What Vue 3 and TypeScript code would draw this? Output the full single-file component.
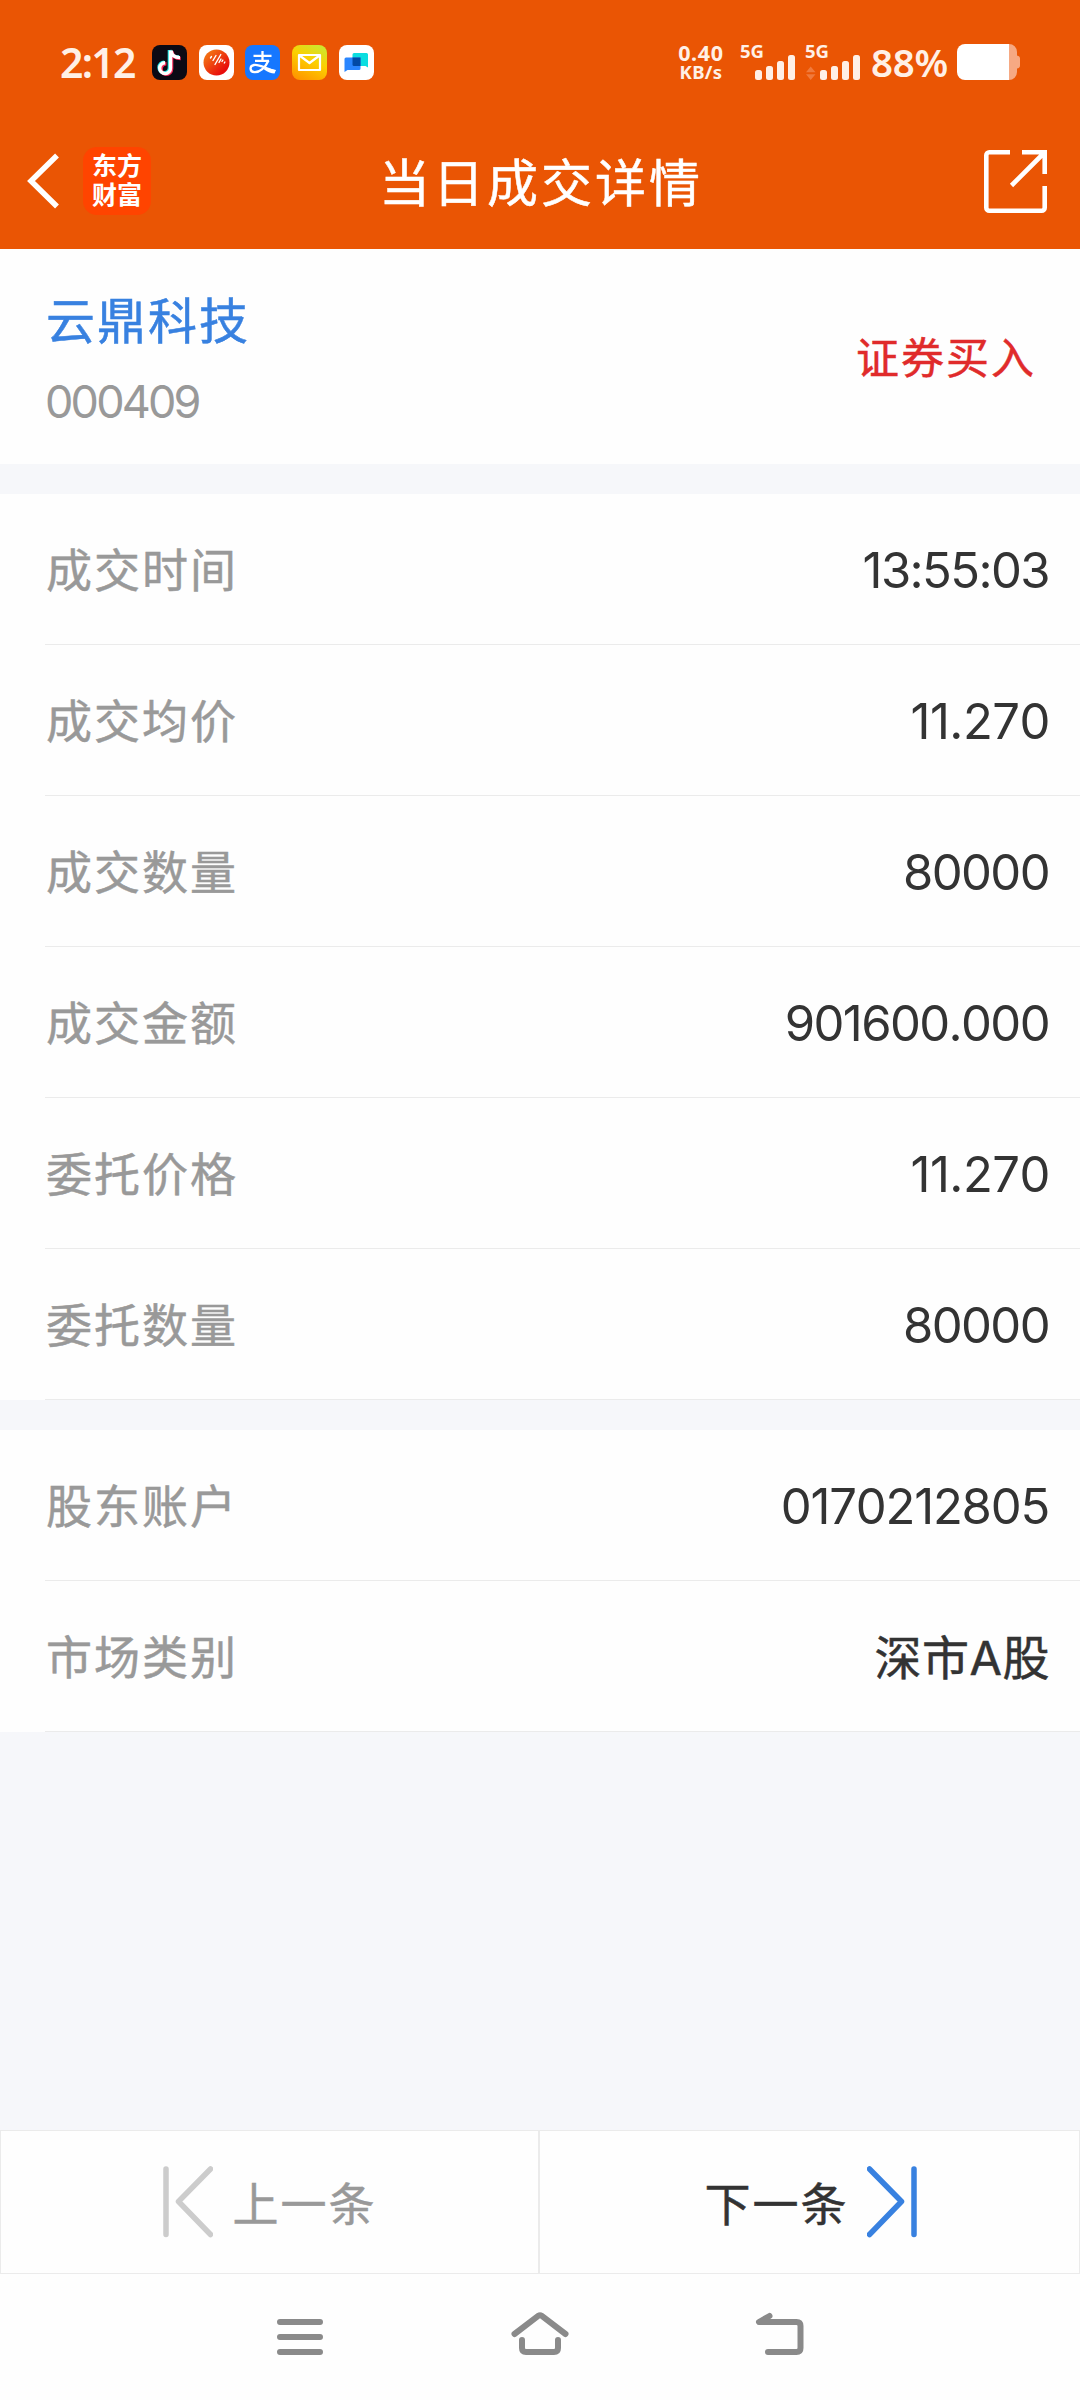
<script setup lang="ts">
interface Field {
  label: string
  value: string
  kind?: 'price' | 'long' | 'text'
}

const tradeFields: Field[] = [
  { label: '成交时间', value: '13:55:03' },
  { label: '成交均价', value: '11.270', kind: 'price' },
  { label: '成交数量', value: '80000' },
  { label: '成交金额', value: '901600.000' },
  { label: '委托价格', value: '11.270', kind: 'price' },
  { label: '委托数量', value: '80000' },
]

const accountFields: Field[] = [
  { label: '股东账户', value: '0170212805', kind: 'long' },
  { label: '市场类别', value: '深市A股', kind: 'text' },
]

const groups: Field[][] = [tradeFields, accountFields]
</script>

<template>
  <div class="screen">
    <header class="top">
      <div class="status">
        <span class="clock">2:12</span>
        <div class="apps">
          <svg viewBox="0 0 35 35">
            <rect width="35" height="35" rx="8" fill="#0b0a14" />
            <g fill="none" stroke-width="3.4">
              <path d="M17.4 5V22.5A5.2 5.2 0 1 1 12.2 17.3M17.8 5C18.3 9.500 22 12 27 12" stroke="#25e5e3" />
              <path d="M19.600 6.500V24A5.2 5.2 0 1 1 14.400 18.800M20 6.500C20.500 11 23.700 13.500 28.700 13.500" stroke="#f62a59" />
              <path d="M18.500 5.500V23A5.400 5.400 0 1 1 13.100 17.800M19 5.500C19.500 10.500 22.700 12.600 28 12.600" stroke="#fff" />
            </g>
          </svg>
          <svg viewBox="0 0 35 35">
            <defs>
              <linearGradient id="ball" x1="0" y1="0" x2="1" y2="1">
                <stop offset="0.2" stop-color="#f26a12" />
                <stop offset="0.8" stop-color="#e80c0c" />
              </linearGradient>
            </defs>
            <rect width="35" height="35" rx="8" fill="#fff" />
            <circle cx="17.500" cy="17.500" r="13" fill="url(#ball)" />
            <path d="M11.500 13l1-1.500M14 15.500l3-5M16 19.500l5.800-10M20 17.500l2-3.500M23 16.500l.8-1.300M25.300 18l.6-1" stroke="#fff" stroke-width="1.400" stroke-linecap="round" />
          </svg>
          <svg viewBox="0 0 35 35">
            <rect width="35" height="35" rx="8" fill="#1677ff" />
            <g fill="none" stroke="#fff" stroke-width="2.300">
              <path d="M8.500 10.800H26.500M17.500 6V15.500M10 15.800H24" />
              <path d="M23.500 15.500C20.500 22.500 14.500 27.500 9.500 27.200C4.500 26.800 4.200 21 9 20C14.500 19 20 23.500 30 26.300" />
            </g>
            <path d="M20 22.500L31 25L29.500 28.500C26 28.500 23 27 19 24.500z" fill="#fff" />
          </svg>
          <svg viewBox="0 0 35 35">
            <defs>
              <linearGradient id="mail" x1="0.200" y1="1" x2="0.700" y2="0">
                <stop offset="0" stop-color="#ff9500" />
                <stop offset="0.600" stop-color="#fcd000" />
                <stop offset="1" stop-color="#cfe62c" />
              </linearGradient>
            </defs>
            <rect width="35" height="35" rx="8" fill="url(#mail)" />
            <path d="M7 10H28V25H7ZM7.500 10.500L17.500 18L27.500 10.500" fill="none" stroke="#fff" stroke-width="2.200" stroke-linejoin="round" />
          </svg>
          <svg viewBox="0 0 35 35">
            <rect width="35" height="35" rx="8" fill="#fff" />
            <path d="M15 8H27.500a1.500 1.500 0 0 1 1.500 1.500V22.500L26.500 21H13.500V9.500A1.500 1.500 0 0 1 15 8z" fill="#0bdde0" />
            <path d="M7 12.500H21.500V23.500A1.500 1.500 0 0 1 20 25H8.500L5.500 27V14A1.500 1.500 0 0 1 7 12.500z" fill="#2a86ff" />
            <path d="M13.500 12.500H21.500V21H15A1.500 1.500 0 0 1 13.500 19.500z" fill="#024aa5" />
          </svg>
        </div>
        <div class="speed">
          <span class="rate">0.40</span>
          <span class="unit">KB/s</span>
        </div>
        <svg class="signals" viewBox="0 0 120 36">
          <g class="net" fill="#fff0e6">
            <text x="-1" y="14">5G</text>
            <text x="64" y="14">5G</text>
            <rect x="14" y="26" width="7" height="10" rx="2.500" />
            <rect x="25" y="22" width="7" height="14" rx="2.500" />
            <rect x="36" y="17" width="7" height="19" rx="2.500" />
            <rect x="47" y="11" width="7" height="25" rx="2.500" />
            <rect x="79" y="26" width="7" height="10" rx="2.500" />
            <rect x="90" y="22" width="7" height="14" rx="2.500" />
            <rect x="101" y="17" width="7" height="19" rx="2.500" />
            <rect x="112" y="11" width="7" height="25" rx="2.500" />
          </g>
          <path d="M65 28.300L69.700 22.500L74.500 28.300zM65 30.300L69.700 36L74.500 30.300z" fill="#f07a3c" />
        </svg>
        <span class="percent">88%</span>
        <svg class="battery" viewBox="0 0 63 36">
          <path d="M52 0a8 8 0 0 1 8 8V11.500q3 .5 3 3V21.500q0 2.500-3 3V28a8 8 0 0 1-8 8z" fill="#f6a983" />
          <path d="M8 0H52V36H8A8 8 0 0 1 0 28V8A8 8 0 0 1 8 0z" fill="#fff" />
        </svg>
      </div>

      <nav class="nav">
        <div class="nav-left">
          <svg class="back" viewBox="0 0 34 56">
            <path d="M31 2.500L5 28L31 53.500" fill="none" stroke="#fff" stroke-width="5.500" />
          </svg>
          <div class="brand"><span>东方</span><span>财富</span></div>
        </div>
        <h1>当日成交详情</h1>
        <svg class="share" viewBox="0 0 63 63">
          <g fill="none" stroke="#fff" stroke-width="4.600">
            <path d="M26 2.300H5.300a3 3 0 0 0-3 3V57.700a3 3 0 0 0 3 3H57.700a3 3 0 0 0 3-3V36" />
            <path d="M38 2.300H60.700V24M60 3L27.500 35.500" />
          </g>
        </svg>
      </nav>
    </header>

    <section class="stock">
      <div class="names">
        <span class="name">云鼎科技</span>
        <span class="code">000409</span>
      </div>
      <span class="side">证券买入</span>
    </section>

    <section v-for="(group, i) in groups" :key="i" class="group">
      <div v-for="field in group" :key="field.label" class="row">
        <span class="label">{{ field.label }}</span>
        <span class="value" :class="field.kind">{{ field.value }}</span>
      </div>
    </section>

    <footer class="pager">
      <button class="prev">
        <svg viewBox="0 0 50 72">
          <path d="M3 3V68.500M47.500 3L15.500 35.500L47.500 68.500" />
        </svg>
        <span>上一条</span>
      </button>
      <button class="next">
        <span>下一条</span>
        <svg viewBox="0 0 50 72">
          <path d="M47 3V68.500M2.500 3L34.500 35.500L2.500 68.500" />
        </svg>
      </button>
    </footer>

    <div class="system">
      <svg viewBox="0 0 60 46">
        <path d="M10 10H50M10 25H50M10 40H50" />
      </svg>
      <svg viewBox="0 0 60 46">
        <path d="M4.500 22L28.500 3.700Q30 2.700 31.500 3.700L55.500 22M12 28V36Q12 40 16 40H44Q48 40 48 36V28" />
      </svg>
      <svg viewBox="0 0 60 46">
        <path d="M19.500 4L9 10H46.500Q50.500 10 50.500 14V36Q50.500 40 46.500 40H18" />
      </svg>
    </div>
  </div>
</template>

<style>
body {
  margin: 0;
}
</style>

<style scoped>
.screen {
  width: 1080px;
  height: 2400px;
  display: flex;
  flex-direction: column;
  background: #f6f7fa;
  font-family: Inter, "Noto Sans CJK SC", sans-serif;
  overflow: hidden;
}

svg {
  display: block;
  flex: none;
}

.top {
  height: 249px;
  background: #ea5504;
  color: #fff;
}

.status {
  display: flex;
  align-items: center;
  height: 106px;
  padding: 9px 60px 0 60px;
  color: #fff0e6;
  font-family: "Noto Sans", sans-serif;
}

.clock {
  width: 92px;
  font-size: 41px;
  font-weight: 600;
  letter-spacing: -1.700px;
  line-height: 50px;
  white-space: nowrap;
}

.apps {
  display: flex;
  gap: 11.700px;
}

.apps svg {
  width: 35px;
  height: 35px;
}

.speed {
  display: flex;
  flex-direction: column;
  align-items: center;
  width: 50px;
  margin-left: auto;
  font-weight: 700;
}

.rate {
  font-size: 21.500px;
  letter-spacing: 0.700px;
  line-height: 20px;
}

.unit {
  font-size: 18.500px;
  letter-spacing: 0.300px;
  line-height: 18px;
}

.signals {
  width: 120px;
  height: 36px;
  margin-left: 15px;
  overflow: visible;
}

.net text {
  font-size: 18.500px;
  font-weight: 700;
}

.percent {
  width: 78px;
  margin: 0 8px 0 10px;
  font-size: 38.500px;
  font-weight: 600;
  letter-spacing: -0.300px;
  line-height: 50px;
  white-space: nowrap;
}

.battery {
  width: 63px;
  height: 36px;
}

.nav {
  display: grid;
  grid-template-columns: 200px 1fr 200px;
  align-items: center;
  height: 132px;
}

.nav-left {
  display: flex;
  align-items: center;
  gap: 23px;
  padding-left: 26px;
}

.back {
  width: 34px;
  height: 56px;
}

.brand {
  display: flex;
  flex-direction: column;
  align-items: center;
  justify-content: center;
  width: 68px;
  height: 68px;
  border-radius: 14px;
  background: #ff4400;
  font-size: 25px;
  font-weight: 700;
  line-height: 29px;
}

h1 {
  margin: 0;
  padding: 6px 0 0 2px;
  text-align: center;
  font-size: 51px;
  font-weight: 400;
  letter-spacing: 3px;
  line-height: 70px;
}

h1,
.name,
.side,
.label,
.text,
.pager span {
  -webkit-text-stroke: 0.500px currentColor;
}

.share {
  width: 63px;
  height: 63px;
  margin: 0 33px 0 auto;
}

.stock {
  display: flex;
  align-items: center;
  justify-content: space-between;
  height: 215px;
  padding: 0 44px 0 46px;
  background: #fefefe;
}

.names {
  display: flex;
  flex-direction: column;
  gap: 15px;
  padding-top: 6px;
}

.name {
  color: #3881e0;
  font-size: 49px;
  letter-spacing: 2px;
  line-height: 70px;
}

.code {
  margin-left: -1px;
  color: #999;
  font-size: 45px;
  letter-spacing: -2.800px;
  line-height: 60px;
}

.side {
  padding-bottom: 3px;
  color: #e02b2b;
  font-size: 43px;
  letter-spacing: 2px;
}

.group {
  margin-top: 30px;
  background: #fefefe;
}

.row {
  display: flex;
  align-items: center;
  justify-content: space-between;
  height: 150px;
  margin-left: 45px;
  padding-right: 31px;
  border-bottom: 1px solid #ebebeb;
}

.label {
  padding: 0 0 4px 1px;
  color: #999;
  font-size: 46px;
  letter-spacing: 2px;
}

.value {
  padding-top: 2px;
  color: #333;
  font-size: 49px;
  font-kerning: none;
  letter-spacing: -1.600px;
}

.value.price {
  letter-spacing: -0.500px;
  margin-right: -1px;
}

.value.long {
  letter-spacing: -1.200px;
}

.value.text {
  padding: 0 0 3px;
  font-size: 47px;
  letter-spacing: 0.500px;
  margin-right: -1px;
}

.pager {
  display: flex;
  height: 144px;
  margin-top: auto;
}

.pager button {
  display: flex;
  align-items: center;
  justify-content: center;
  flex: 1;
  gap: 20px;
  padding: 0;
  border: 1px solid #ebebeb;
  background: #fefefe;
  font: 46px/66px "Noto Sans CJK SC", sans-serif;
  letter-spacing: 2px;
}

.pager svg {
  width: 50px;
  height: 72px;
  fill: none;
  stroke-width: 5.500;
  stroke-linecap: round;
  stroke-linejoin: round;
}

.prev {
  color: #999;
  stroke: #ccc;
}

.pager .next {
  gap: 18px;
  padding-left: 2px;
  color: #333;
  stroke: #3881e0;
}

.pager span {
  padding-bottom: 2px;
  stroke: none;
}

.system {
  display: flex;
  justify-content: center;
  gap: 180px;
  height: 88px;
  padding-top: 38px;
  background: #fefefe;
}

.system svg {
  width: 60px;
  height: 46px;
  fill: none;
  stroke: #8a8a8a;
  stroke-width: 6;
  stroke-linecap: round;
  stroke-linejoin: round;
}
</style>
